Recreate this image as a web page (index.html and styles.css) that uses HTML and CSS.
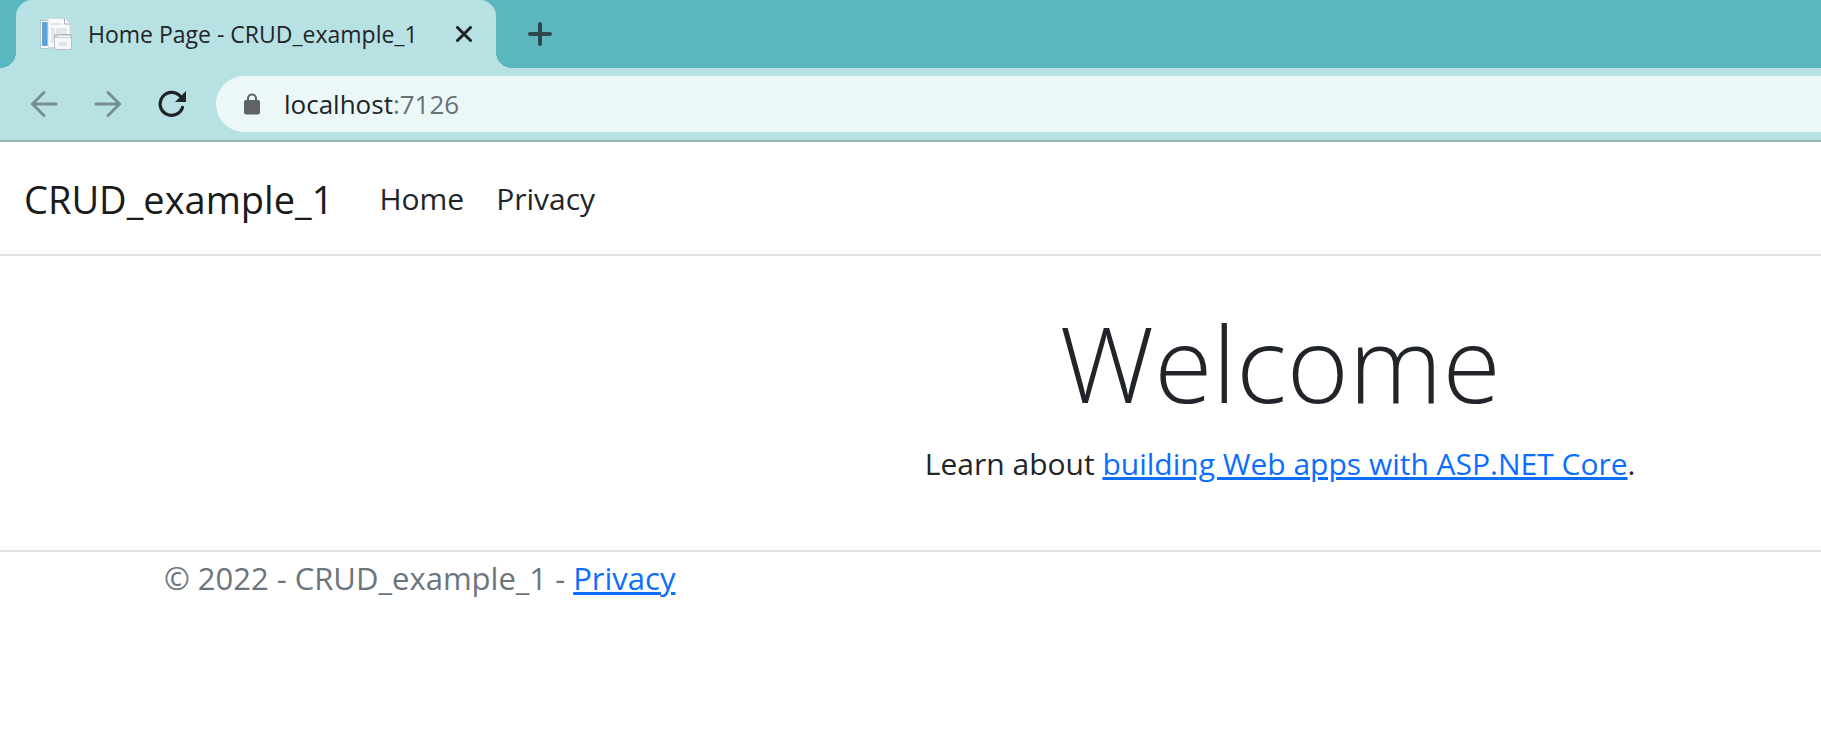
FILE: index.html
```html
<!DOCTYPE html>
<html lang="en">
<head>
<meta charset="utf-8">
<title>Home Page - CRUD_example_1</title>
<link rel="stylesheet" href="styles.css">
</head>
<body>
<div class="browser">
  <div class="tab-strip">
    <div class="tab">
      <svg class="favicon" width="32" height="32" viewBox="0 0 32 32" aria-hidden="true">
        <path d="M.5 2.500h8v28h-8z" fill="#fff" stroke="#b5c4ca"/>
        <path d="M2 4h6v24H2z" fill="#5ba3d6"/>
        <path d="M8 .5h16l6 5.500V29.500H8z" fill="#f9fafc" stroke="#d3dade"/>
        <path d="M24.500.5v5.500h5.500" fill="#fff" stroke="#a4adb1"/>
        <path d="M11 5h11v2H11zM11 10h4v15h-4zM16 10h11v6H16z" fill="#e3e6ea"/>
        <path d="M14.500 16.500h17v15h-17z" fill="#f5f6f9" stroke="#b8bfc4"/>
        <path d="M15 17h16v3H15z" fill="#c9cfd4"/>
        <path d="M18 18h12v1H18z" fill="#fff"/>
        <path d="M19 24h8v4h-8z" fill="#dfe3e8"/>
      </svg>
      <span class="tab-title">Home Page - CRUD_example_1</span>
      <button class="icon-button tab-close" type="button" aria-label="Close tab">
        <svg width="16" height="16" viewBox="0 0 16 16"><path d="M1.500 1.500l13 13M14.500 1.500l-13 13" stroke="#202426" stroke-width="3" stroke-linecap="round"/></svg>
      </button>
    </div>
    <button class="icon-button new-tab" type="button" aria-label="New tab">
      <svg width="24" height="24" viewBox="0 0 24 24"><path d="M12 2v20M2 12h20" stroke="#2f474b" stroke-width="4" stroke-linecap="round"/></svg>
    </button>
  </div>
  <div class="toolbar">
    <button class="icon-button" type="button" aria-label="Back">
      <svg width="28" height="28" viewBox="0 0 28 28"><path d="M26 14H3M14 2.500L2.500 14 14 25.500" fill="none" stroke="#778f93" stroke-width="3" stroke-linecap="round"/></svg>
    </button>
    <button class="icon-button" type="button" aria-label="Forward">
      <svg width="28" height="28" viewBox="0 0 28 28"><path d="M2 14h23M14 2.500L25.500 14 14 25.500" fill="none" stroke="#778f93" stroke-width="3" stroke-linecap="round"/></svg>
    </button>
    <button class="icon-button" type="button" aria-label="Reload">
      <svg width="28" height="28" viewBox="0 0 28 28"><path d="M24.500 17.500A11.500 11.500 0 1 1 22.500 6.500" fill="none" stroke="#202426" stroke-width="3.200" stroke-linecap="round"/><path d="M28 1v11H17z" fill="#202426"/></svg>
    </button>
    <div class="address">
      <svg width="16" height="22" viewBox="0 0 16 22" aria-hidden="true"><path d="M4 8V5.500a4 4 0 0 1 8 0V8" fill="none" stroke="#5f6368" stroke-width="2"/><rect y="7" width="16" height="14.500" rx="2" fill="#5f6368"/></svg>
      <span class="url">localhost<span class="port">:7126</span></span>
    </div>
  </div>
</div>
<header class="site-header">
  <a class="brand" href="#">CRUD_example_1</a>
  <nav class="nav">
    <a href="#">Home</a>
    <a href="#">Privacy</a>
  </nav>
</header>
<main class="main">
  <h1>Welcome</h1>
  <p>Learn about <a class="link" href="#">building Web apps with ASP.NET Core</a>.</p>
</main>
<footer class="footer">© 2022 - CRUD_example_1 - <a class="link" href="#">Privacy</a></footer>
</body>
</html>
```
FILE: styles.css
```css
* { box-sizing: border-box; }
body {
  margin: 0;
  background: #fff;
  color: #212529;
  font-family: "Open Sans", "Noto Sans", sans-serif;
  font-size: 30px;
  line-height: 48px;
}
svg { display: block; }
.browser {
  background: #b8e1e4;
  border-bottom: 2px solid #94b4b7;
}
.tab-strip {
  display: flex;
  height: 68px;
  background: #5bb8c1;
}
.tab {
  position: relative;
  display: flex;
  align-items: center;
  width: 480px;
  margin-left: 16px;
  padding: 0 24px;
  border-radius: 16px 16px 0 0;
  background: #b8e1e4;
}
.tab::before,
.tab::after {
  content: "";
  position: absolute;
  bottom: 0;
  width: 16px;
  height: 16px;
}
.tab::before {
  right: 100%;
  background: radial-gradient(circle at 0 0, #5bb8c1 16px, #b8e1e4 16px);
}
.tab::after {
  left: 100%;
  background: radial-gradient(circle at 100% 0, #5bb8c1 16px, #b8e1e4 16px);
}
.tab-title {
  flex: 1;
  margin-left: 16px;
  font-size: 23px;
  line-height: 32px;
  white-space: nowrap;
}
.icon-button {
  padding: 0;
  border: 0;
  background: none;
}
.new-tab { margin-left: 32px; }
.toolbar {
  display: flex;
  align-items: center;
  gap: 36px;
  padding: 8px 0 8px 30px;
}
.address {
  display: flex;
  flex: 1;
  align-items: center;
  gap: 24px;
  height: 56px;
  margin-left: -6px;
  padding-left: 28px;
  border-radius: 28px 0 0 28px;
  background: #ecf8f8;
}
.url { font-size: 26px; line-height: 40px; color: #202426; }
.port { color: #687173; }
.site-header {
  display: flex;
  align-items: center;
  gap: 46px;
  padding: 27px 24px 25px;
  border-bottom: 2px solid #dee2e6;
}
.site-header a { text-decoration: none; color: #212529; }
.site-header .brand {
  font-size: 38px;
  line-height: 60px;
  color: #1b1b1b;
}
.nav { display: flex; gap: 32px; }
.main {
  padding: 42px 0 62px 40.6%;
  text-align: center;
}
h1 {
  margin: 0 0 14px;
  font-size: 106px;
  font-weight: 300;
  line-height: 128px;
}
p { margin: 0; }
.link { color: #0d6efd; text-decoration-thickness: 3px; }
.footer {
  padding: 2px 9%;
  border-top: 2px solid #dee2e6;
  color: #6c757d;
  font-size: 31px;
}
```
